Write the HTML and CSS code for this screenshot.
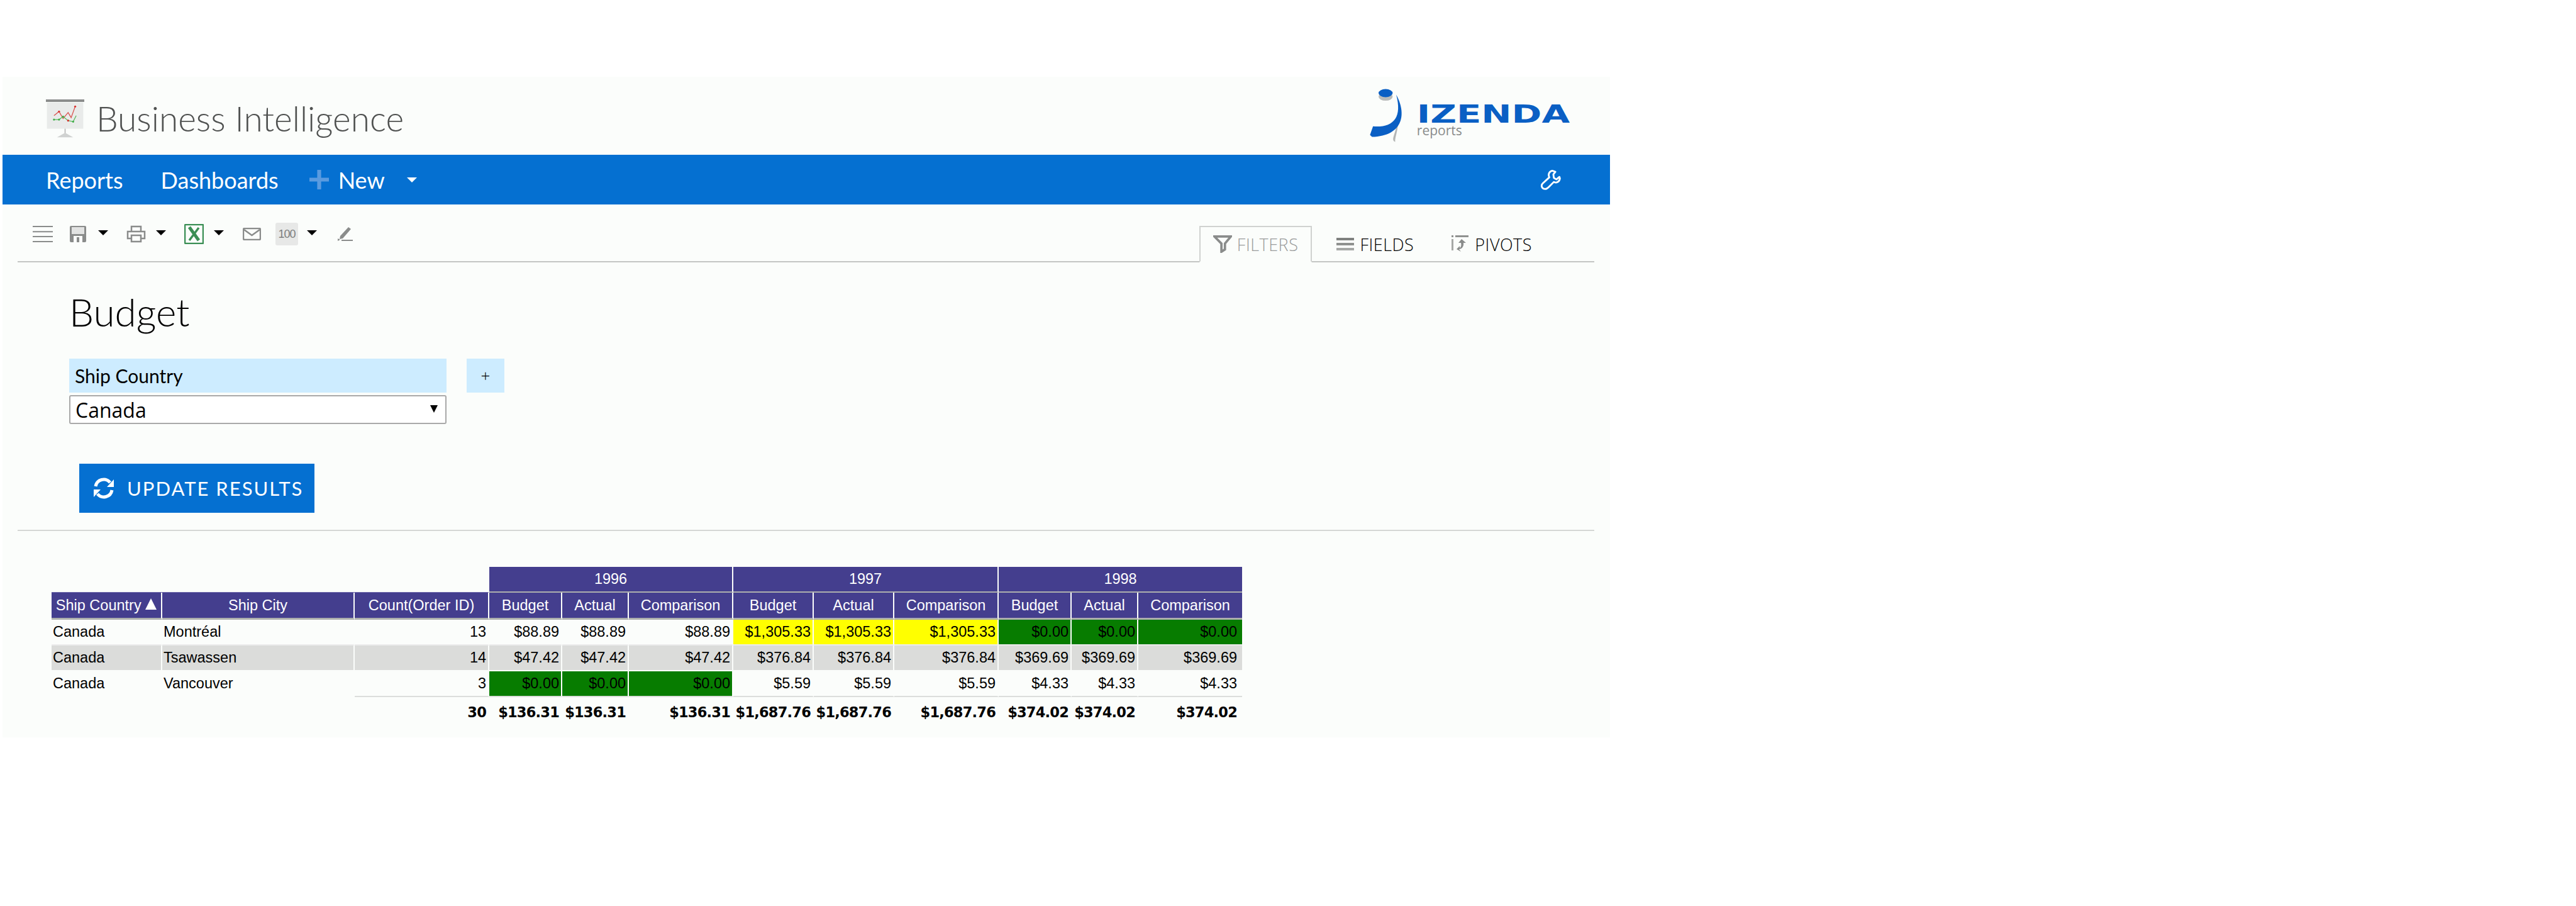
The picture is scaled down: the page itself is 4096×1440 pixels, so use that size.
FILE: index.html
```html
<!DOCTYPE html>
<html lang="en">
<head>
    <meta charset="UTF-8">
    <title>Business Intelligence</title>
    <link rel="stylesheet" href="styles.css">
</head>
<body>
    <div class="app">
        <header class="masthead">
            <div class="brand">
                <svg class="brand-icon" viewBox="0 0 76 76">
                    <rect x="2" y="6" width="72" height="52" fill="#e9ebea"/>
                    <rect x="0" y="0" width="76" height="5" fill="#8b8d8c"/>
                    <polyline points="16,32 26,24 34,38 44,26 50,36 58,14" fill="none" stroke="#d9534f" stroke-width="1.6"/>
                    <polyline points="16,40 26,40 34,34 44,42 54,44 60,32" fill="none" stroke="#5cb85c" stroke-width="1.6"/>
                    <circle cx="58" cy="14" r="2" fill="#d9302c"/><circle cx="26" cy="24" r="2" fill="#d9302c"/><circle cx="44" cy="42" r="2" fill="#d9302c"/>
                    <circle cx="16" cy="40" r="2" fill="#3fae49"/><circle cx="26" cy="40" r="2" fill="#3fae49"/><circle cx="54" cy="44" r="2" fill="#3fae49"/><circle cx="34" cy="34" r="2" fill="#3fae49"/>
                    <path d="M37 58h2v10h-2z" fill="#b5b7b6"/>
                    <path d="M38 66 L22 75 H54 Z" fill="#d0d2d1"/>
                </svg>
                <span class="brand-name">Business Intelligence</span>
            </div>
            <svg class="logo" viewBox="2720 170 405 115">
                <ellipse cx="2754" cy="192" rx="14" ry="8" fill="#b9bbba"/>
                <ellipse cx="2754" cy="185" rx="14" ry="8" fill="#0a5fc4"/>
                <path d="M2778 237 C2781 255 2772 272 2773 282 C2762 278 2778 262 2776 237 Z" fill="#b4b6b5"/>
                <path d="M2775 188 C2796 225 2790 270 2727 272 L2723 268 L2729 251 C2768 254 2788 235 2775 188 Z" fill="#0a5fc4"/>
                <text class="logo-word" x="2816" y="244" textLength="304" lengthAdjust="spacingAndGlyphs">IZENDA</text>
                <text class="logo-sub" x="2816" y="269" textLength="90" lengthAdjust="spacingAndGlyphs">reports</text>
            </svg>
        </header>

        <nav class="topnav">
            <a class="nav-link">Reports</a>
            <a class="nav-link">Dashboards</a>
            <svg class="nav-plus" viewBox="0 0 30 30"><path d="M12 0h6v12h12v6H18v12h-6V18H0v-6h12z"/></svg>
            <a class="nav-link nav-new">New</a>
            <span class="caret caret-white"></span>
            <svg class="nav-wrench" viewBox="0 0 41 41">
                <path d="M24 3 C18 4 15 10 18 16 L5 28 C1 32 3 39 10 39 C13 39 15 37 17 35 L27 25 C32 28 38 25 39 18 L38 15 L32 20 L27 17 L26 10 L30 5 Z"/>
            </svg>
        </nav>

        <div class="toolbar">
            <div class="tools">
                <svg class="tool tool-menu" viewBox="0 0 32 26"><path d="M0 1h32M0 9.300h32M0 17h32M0 25h32"/></svg>
                <svg class="tool tool-save" viewBox="0 0 28 28">
                    <rect x="1" y="1" width="26" height="26" rx="2" fill="#8a8c8b"/>
                    <rect x="4" y="3" width="20" height="11" fill="#e2e3e2"/>
                    <rect x="7" y="17" width="14" height="10" fill="#fbfdfb"/>
                    <rect x="12" y="19" width="4" height="8" fill="#8a8c8b"/>
                </svg>
                <span class="caret"></span>
                <svg class="tool tool-print" viewBox="0 0 31 28">
                    <path class="tool-line" d="M8 9V2h15v7M7 21H2V10h27v11h-5"/>
                    <path class="tool-line" d="M8 16h15v10H8z"/>
                </svg>
                <span class="caret"></span>
                <svg class="tool tool-excel" viewBox="0 0 31 32">
                    <rect x="1" y="1" width="29" height="30" rx="1" fill="#fbfdfb" stroke="#3b8f55" stroke-width="2.500"/>
                    <path d="M8 5 L23 26" stroke="#3b8f55" stroke-width="5"/>
                    <path d="M23 6 L8 26" stroke="#3b8f55" stroke-width="3.500"/>
                </svg>
                <span class="caret"></span>
                <svg class="tool tool-mail" viewBox="0 0 29 20">
                    <rect class="tool-line" x="1" y="1" width="27" height="18" rx="2"/>
                    <path class="tool-line" d="M2 3 L14.500 12 L27 3"/>
                </svg>
                <span class="tool-hundred">100</span>
                <span class="caret"></span>
                <svg class="tool tool-pencil" viewBox="0 0 26 24">
                    <path d="M18 1 L22 4 L9 19 L4 20 L5 15 Z" fill="#8a8c8b"/>
                    <path d="M1 19 L5 21 L1 23 Z" fill="#8a8c8b"/>
                    <rect x="7" y="21" width="18" height="2" fill="#8a8c8b"/>
                </svg>
            </div>
            <div class="tabs">
                <div class="tab tab-active">
                    <svg class="tab-icon" viewBox="0 0 32 30"><path d="M2 2 H30 L20 14 V24 L14 28 V14 Z" fill="none" stroke="#8a8c8b" stroke-width="4"/></svg>
                    FILTERS
                </div>
                <div class="tab tab-fields">
                    <svg class="tab-icon" viewBox="0 0 28 20">
                        <rect width="28" height="4" fill="#7f817f"/><rect y="8" width="28" height="4" fill="#8f918f"/><rect y="16" width="28" height="4" fill="#a6a8a6"/>
                    </svg>
                    FIELDS
                </div>
                <div class="tab tab-pivots">
                    <svg class="tab-icon" viewBox="0 0 28 28">
                        <rect x="6" y="0" width="21" height="3" fill="#8f918f"/>
                        <rect x="0" y="0" width="3" height="3" fill="#8f918f"/>
                        <rect x="0" y="6" width="3" height="18" fill="#a6a8a6"/>
                        <path d="M16 6 L23 12 H19 C20 18 16 22 12 22 L15 26 L8 22 L13 17 V20 C15 19 16 16 15 12 H11 Z" fill="#8a8c8b"/>
                    </svg>
                    PIVOTS
                </div>
            </div>
        </div>

        <main class="report">
            <h1 class="report-title">Budget</h1>
            <div class="filter-row">
                <div class="filter-field">
                    <div class="filter-label">Ship Country</div>
                    <div class="filter-select">
                        <select class="filter-input"><option>Canada</option></select>
                    </div>
                </div>
                <button class="filter-add">+</button>
            </div>
            <button class="update-btn">
                <svg class="update-icon" viewBox="0 0 34 36">
                    <path d="M4 15 A13 13 0 0 1 27 9" fill="none" stroke="#fff" stroke-width="5"/>
                    <path d="M30 21 A13 13 0 0 1 7 27" fill="none" stroke="#fff" stroke-width="5"/>
                    <path d="M33 4 V16 H22 Z" fill="#fff"/>
                    <path d="M1 32 V20 H12 Z" fill="#fff"/>
                </svg>
                UPDATE RESULTS
            </button>
        </main>

        <div class="divider"></div>

        <table class="pivot">
            <colgroup>
                <col class="c-country"><col class="c-city"><col class="c-count">
                <col class="c-bud"><col class="c-act"><col class="c-cmp">
                <col class="c-bud2"><col class="c-bud2"><col class="c-cmp">
                <col class="c-bud"><col class="c-act"><col class="c-cmp3">
            </colgroup>
            <thead>
                <tr class="group-row">
                    <th class="blank" colspan="3"></th>
                    <th colspan="3">1996</th>
                    <th colspan="3">1997</th>
                    <th colspan="3">1998</th>
                </tr>
                <tr class="head-row">
                    <th>Ship Country <span class="sort-up"></span></th>
                    <th>Ship City</th>
                    <th>Count(Order ID)</th>
                    <th>Budget</th><th>Actual</th><th>Comparison</th>
                    <th>Budget</th><th>Actual</th><th>Comparison</th>
                    <th>Budget</th><th>Actual</th><th>Comparison</th>
                </tr>
            </thead>
            <tbody>
                <tr>
                    <td class="txt">Canada</td><td class="txt">Montréal</td><td>13</td>
                    <td>$88.89</td><td>$88.89</td><td>$88.89</td>
                    <td class="hi">$1,305.33</td><td class="hi">$1,305.33</td><td class="hi">$1,305.33</td>
                    <td class="lo">$0.00</td><td class="lo">$0.00</td><td class="lo">$0.00</td>
                </tr>
                <tr class="alt">
                    <td class="txt">Canada</td><td class="txt">Tsawassen</td><td>14</td>
                    <td>$47.42</td><td>$47.42</td><td>$47.42</td>
                    <td>$376.84</td><td>$376.84</td><td>$376.84</td>
                    <td>$369.69</td><td>$369.69</td><td>$369.69</td>
                </tr>
                <tr>
                    <td class="txt">Canada</td><td class="txt">Vancouver</td><td>3</td>
                    <td class="lo">$0.00</td><td class="lo">$0.00</td><td class="lo">$0.00</td>
                    <td>$5.59</td><td>$5.59</td><td>$5.59</td>
                    <td>$4.33</td><td>$4.33</td><td>$4.33</td>
                </tr>
                <tr class="total-row">
                    <td class="none"></td><td class="none"></td><td>30</td>
                    <td>$136.31</td><td>$136.31</td><td>$136.31</td>
                    <td>$1,687.76</td><td>$1,687.76</td><td>$1,687.76</td>
                    <td>$374.02</td><td>$374.02</td><td>$374.02</td>
                </tr>
            </tbody>
        </table>
    </div>
</body>
</html>
```

FILE: styles.css
```css
body {
    margin: 0;
    background-color: #fff;
    font-family: 'Lato', 'Open Sans', sans-serif;
    color: #000;
}

.app {
    width: 2556px;
    margin: 122px 0 0 4px;
    padding-bottom: 16px;
    background-color: #fbfdfb;
}

/* header */
.masthead {
    display: flex;
    justify-content: space-between;
    height: 124px;
    padding-right: 60px;
}

.brand {
    display: flex;
    align-items: center;
    gap: 19px;
    padding: 8px 0 0 69px;
}

.brand-icon {
    width: 61px;
    height: 61px;
}

.brand-name {
    font-size: 55px;
    font-weight: 300;
    color: #4f5150;
}

.logo {
    width: 324px;
    height: 92px;
    margin-top: 14px;
}

.logo-word {
    font-family: 'DejaVu Sans', sans-serif;
    font-weight: bold;
    font-size: 48px;
    fill: #0a5fc4;
}

.logo-sub {
    font-family: 'Open Sans', sans-serif;
    font-size: 27px;
    fill: #8a8c8b;
}

/* blue nav */
.topnav {
    display: flex;
    align-items: center;
    height: 79px;
    padding: 0 78px 0 69px;
    background-color: #0570d1;
}

.nav-link {
    font-size: 36px;
    color: #fff;
    margin-right: 60px;
}

.nav-plus {
    width: 31px;
    height: 31px;
    fill: #5a9be0;
    margin-left: -11px;
    margin-right: 15px;
}

.nav-new {
    margin-right: 35px;
}

.caret {
    width: 0;
    height: 0;
    border-left: 8px solid transparent;
    border-right: 8px solid transparent;
    border-top: 8px solid #000;
}

.caret-white {
    border-top-color: #fff;
}

.nav-wrench {
    width: 33px;
    height: 33px;
    margin-left: auto;
    fill: none;
    stroke: #fff;
    stroke-width: 3.5;
    stroke-linejoin: round;
}

/* toolbar */
.toolbar {
    display: flex;
    justify-content: space-between;
    align-items: flex-end;
    height: 92px;
    margin: 0 25px 0 24px;
    padding: 0 99px 0 24px;
    border-bottom: 2px solid #c4c6c4;
    box-sizing: border-box;
}

.tools {
    display: flex;
    align-items: center;
    height: 36px;
    margin-bottom: 25px;
}

.tool {
    flex: none;
}

.tool-line {
    fill: none;
    stroke: #8a8c8b;
    stroke-width: 2.500;
}

.tools .caret {
    margin-bottom: 5px;
}

.tool-menu {
    width: 32px;
    height: 26px;
    stroke: #8a8c8b;
    stroke-width: 2;
    margin-right: 26px;
}

.tool-save {
    width: 28px;
    height: 28px;
    margin-right: 18px;
}

.tool-print {
    width: 31px;
    height: 28px;
    margin-left: 29px;
    margin-right: 16px;
}

.tool-excel {
    width: 31px;
    height: 32px;
    margin-left: 29px;
    margin-right: 16px;
}

.tool-mail {
    width: 29px;
    height: 20px;
    margin-left: 30px;
    margin-right: 23px;
}

.tool-hundred {
    width: 36px;
    height: 36px;
    margin-right: 14px;
    background-color: #e7e8e7;
    border-radius: 3px;
    font-family: 'Liberation Sans', sans-serif;
    font-size: 18px;
    line-height: 36px;
    letter-spacing: -1px;
    text-align: center;
    color: #7d7f7e;
}

.tool-pencil {
    width: 26px;
    height: 24px;
    margin-left: 32px;
}

.tabs {
    display: flex;
    align-items: stretch;
    height: 58px;
    margin-bottom: -2px;
}

.tab {
    display: flex;
    align-items: center;
    gap: 8px;
    font-family: 'Open Sans', sans-serif;
    font-size: 27px;
    font-weight: 300;
    letter-spacing: 0.5px;
}

.tab-icon {
    width: 30px;
    height: 28px;
}

.tab-active {
    padding: 0 20px;
    border: 2px solid #d0d2d0;
    border-bottom: 2px solid #fbfdfb;
    color: #9a9c9b;
}

.tab-fields {
    margin-left: 38px;
}

.tab-fields .tab-icon {
    height: 20px;
}

.tab-pivots {
    margin-left: 59px;
}

/* report body */
.report {
    padding-left: 106px;
}

.report-title {
    margin: 42px 0 0;
    font-size: 62px;
    font-weight: 300;
    line-height: 72px;
}

.filter-row {
    display: flex;
    gap: 32px;
    margin-top: 39px;
}

.filter-field {
    width: 600px;
}

.filter-label {
    height: 54px;
    padding-left: 9px;
    background-color: #cdecff;
    font-size: 30px;
    line-height: 54px;
}

.filter-select {
    position: relative;
    margin-top: 4px;
}

.filter-select::after {
    content: '';
    position: absolute;
    right: 14px;
    top: 16px;
    border-left: 6px solid transparent;
    border-right: 6px solid transparent;
    border-top: 12px solid #000;
}

.filter-input {
    display: block;
    width: 100%;
    height: 46px;
    padding: 0 8px;
    appearance: none;
    background-color: #fff;
    border: 2px solid #a9a9a9;
    border-radius: 3px;
    font-family: 'Open Sans', sans-serif;
    font-size: 32px;
    color: #000;
}

.filter-add {
    width: 60px;
    height: 54px;
    border: none;
    background-color: #cdecff;
    font-family: 'Open Sans', sans-serif;
    font-size: 26px;
    font-weight: 300;
    color: #000;
}

.update-btn {
    display: flex;
    align-items: center;
    gap: 20px;
    width: 374px;
    height: 78px;
    margin: 63px 0 0 16px;
    padding: 0 0 0 22px;
    border: none;
    background-color: #0570d1;
    font-family: 'Lato', sans-serif;
    font-size: 31px;
    letter-spacing: 2px;
    color: #fff;
}

.update-icon {
    width: 34px;
    height: 36px;
}

.divider {
    height: 2px;
    margin: 27px 25px 0 24px;
    background-color: #d5d7d5;
}

/* pivot table */
.pivot {
    width: 1893px;
    margin: 57px 0 0 78px;
    table-layout: fixed;
    border-collapse: separate;
    border-spacing: 0;
    font-family: 'Liberation Sans', sans-serif;
    font-size: 23.500px;
}

.c-country { width: 176px; }
.c-city { width: 306px; }
.c-count { width: 214px; }
.c-bud { width: 116px; }
.c-act { width: 106px; }
.c-cmp { width: 166px; }
.c-bud2 { width: 128px; }
.c-cmp3 { width: 165px; }

.pivot th {
    padding: 0;
    background-color: #443e8e;
    background-clip: padding-box;
    border-right: 2px solid #fbfdfb;
    font-weight: normal;
    color: #fff;
    text-align: center;
}

.pivot th:last-child {
    border-right: none;
}

.group-row th {
    height: 39px;
    border-bottom: 2px solid #adafad;
}

.group-row .blank {
    background-color: transparent;
    border-right: 2px solid #fbfdfb;
    border-bottom: 1px solid #6a65a8;
}

.head-row th {
    height: 40px;
    border-bottom: 3px solid #adafad;
}

.sort-up {
    display: inline-block;
    width: 0;
    height: 0;
    vertical-align: 1px;
    border-left: 9px solid transparent;
    border-right: 9px solid transparent;
    border-bottom: 18px solid #fff;
}

.pivot td {
    height: 39px;
    padding: 0 3px 0 2px;
    border-right: 2px solid #fbfdfb;
    border-bottom: 2px solid #ececec;
    background-clip: padding-box;
    text-align: right;
    white-space: nowrap;
    overflow: hidden;
}

.pivot td:last-child {
    border-right: none;
    padding-right: 8px;
}

.pivot .txt {
    text-align: left;
}

.hi {
    background-color: #ffff00;
}

.lo {
    background-color: #077c00;
}

.alt td {
    background-color: #dbdcda;
    border-bottom-color: #fbfdfb;
}

.pivot tr:nth-child(3) td {
    border-bottom-color: #fbfdfb;
}

.pivot tr:nth-child(3) td:nth-child(n+3) {
    border-bottom-color: #dcdedc;
}

.total-row td {
    height: 48px;
    border-bottom: none;
    border-right-color: transparent;
    font-family: 'DejaVu Sans', sans-serif;
    font-size: 22.500px;
    font-weight: bold;
    letter-spacing: -0.8px;
}
```
